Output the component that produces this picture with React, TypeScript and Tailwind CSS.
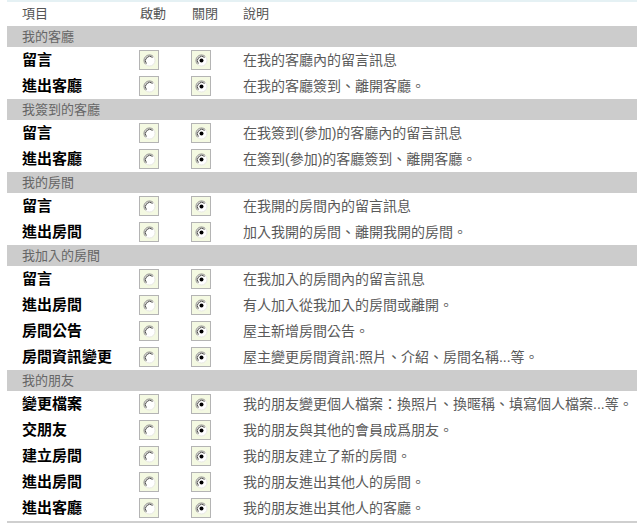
const font = { fontFamily: '"Liberation Sans", "Noto Sans CJK TC", sans-serif' };

type Item = { label: string; desc: string };
type Section = { title: string; items: Item[] };

const sections: Section[] = [
  {
    title: '我的客廳',
    items: [
      { label: '留言', desc: '在我的客廳內的留言訊息' },
      { label: '進出客廳', desc: '在我的客廳簽到、離開客廳。' },
    ],
  },
  {
    title: '我簽到的客廳',
    items: [
      { label: '留言', desc: '在我簽到(參加)的客廳內的留言訊息' },
      { label: '進出客廳', desc: '在簽到(參加)的客廳簽到、離開客廳。' },
    ],
  },
  {
    title: '我的房間',
    items: [
      { label: '留言', desc: '在我開的房間內的留言訊息' },
      { label: '進出房間', desc: '加入我開的房間、離開我開的房間。' },
    ],
  },
  {
    title: '我加入的房間',
    items: [
      { label: '留言', desc: '在我加入的房間內的留言訊息' },
      { label: '進出房間', desc: '有人加入從我加入的房間或離開。' },
      { label: '房間公告', desc: '屋主新增房間公告。' },
      { label: '房間資訊變更', desc: '屋主變更房間資訊:照片、介紹、房間名稱...等。' },
    ],
  },
  {
    title: '我的朋友',
    items: [
      { label: '變更檔案', desc: '我的朋友變更個人檔案：換照片、換暱稱、填寫個人檔案...等。' },
      { label: '交朋友', desc: '我的朋友與其他的會員成爲朋友。' },
      { label: '建立房間', desc: '我的朋友建立了新的房間。' },
      { label: '進出房間', desc: '我的朋友進出其他人的房間。' },
      { label: '進出客廳', desc: '我的朋友進出其他人的客廳。' },
    ],
  },
];

function Radio({ checked }: { checked: boolean }) {
  return (
    <div className="w-[20px] h-[20px] border border-[#b4b4b4] bg-[#f4f9e2] flex items-center justify-center">
      <svg width="13" height="13" viewBox="0 0 13 13">
        <circle cx="6.5" cy="6.5" r="5.5" fill="#ffffff" />
        {/* dark upper-left arc */}
        <path d="M10.4 2.6 A5.5 5.5 0 0 0 2.6 10.4" fill="none" stroke="#8a8a86" strokeWidth="1" />
        <path d="M9.6 3.4 A4.4 4.4 0 0 0 3.4 9.6" fill="none" stroke="#4e4e4a" strokeWidth="1" />
        {/* light lower-right arc */}
        <path d="M10.4 2.6 A5.5 5.5 0 0 1 2.6 10.4" fill="none" stroke="#e8e8e4" strokeWidth="1" />
        {checked && <circle cx="6.5" cy="6.5" r="2" fill="#000000" />}
      </svg>
    </div>
  );
}

export default function App() {
  return (
    <div className="w-[637px] h-[523px] bg-white overflow-hidden" style={font}>
      <div className="ml-[7px]">
        {/* header */}
        <div className="h-[2px] bg-[#e5f1f4]" />
        <div className="h-[24px] grid grid-cols-[117px_52px_52px_1fr] items-center pl-[15px] text-[13px] text-[#555]">
          <span>項目</span>
          <span className="pl-[1px]">啟動</span>
          <span className="pl-[1px]">關閉</span>
          <span>說明</span>
        </div>

        {sections.map((s) => (
          <div key={s.title}>
            <div className="h-[21px] bg-[#cccccc] flex items-center pl-[15px] text-[13px] text-[#666]">
              {s.title}
            </div>
            {s.items.map((it) => (
              <div
                key={it.label}
                className="h-[26px] grid grid-cols-[117px_52px_52px_1fr] items-center pl-[15px]"
              >
                <span className="text-[15px] font-bold text-black">{it.label}</span>
                <Radio checked={false} />
                <Radio checked={true} />
                <span className="text-[14px] text-[#5a5a5a] whitespace-nowrap">{it.desc}</span>
              </div>
            ))}
          </div>
        ))}
        <div className="h-[2px] bg-[#cfcfcf]" />
      </div>
    </div>
  );
}
